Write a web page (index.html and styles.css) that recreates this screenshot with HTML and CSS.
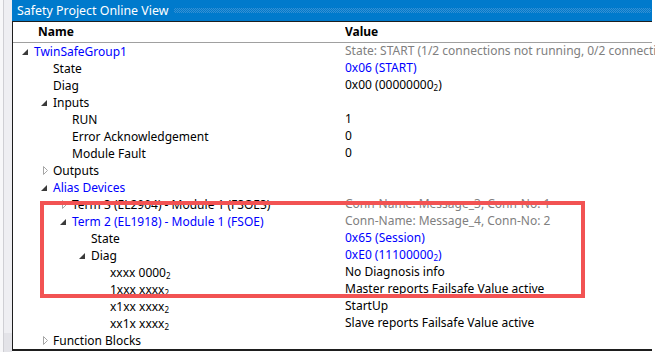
FILE: index.html
```html
<!DOCTYPE html>
<html lang="en">
<head>
    <meta charset="UTF-8">
    <link rel="stylesheet" href="styles.css">
</head>
<body>
    <div class="side">
        <div class="side-top"></div>
        <div class="side-bottom"></div>
    </div>

    <div class="panel">
        <div class="titlebar">
            <span class="title">Safety Project Online View</span>
            <span class="grip"></span>
        </div>

        <div class="view">
            <div class="row header">
                <div class="name">Name</div>
                <div class="value">Value</div>
            </div>

            <div class="row">
                <div class="name lvl0"><span class="tog"><svg class="open" width="6" height="6"><polygon points="6,0 6,6 0,6"/></svg></span><span class="blue">TwinSafeGroup1</span></div>
                <div class="value gray">State: START (1/2 connections not running, 0/2 connections with error)</div>
            </div>
            <div class="row">
                <div class="name lvl1"><span class="tog"></span>State</div>
                <div class="value blue">0x06 (START)</div>
            </div>
            <div class="row">
                <div class="name lvl1"><span class="tog"></span>Diag</div>
                <div class="value">0x00 (00000000<span class="sub">2</span>)</div>
            </div>
            <div class="row">
                <div class="name lvl1"><span class="tog"><svg class="open" width="6" height="6"><polygon points="6,0 6,6 0,6"/></svg></span>Inputs</div>
                <div class="value"></div>
            </div>
            <div class="row">
                <div class="name lvl2"><span class="tog"></span>RUN</div>
                <div class="value">1</div>
            </div>
            <div class="row">
                <div class="name lvl2"><span class="tog"></span>Error Acknowledgement</div>
                <div class="value">0</div>
            </div>
            <div class="row">
                <div class="name lvl2"><span class="tog"></span>Module Fault</div>
                <div class="value">0</div>
            </div>
            <div class="row">
                <div class="name lvl1"><span class="tog"><svg class="closed" width="6" height="10"><polygon points="0.5,0.5 4.5,4.5 0.5,8.5"/></svg></span>Outputs</div>
                <div class="value"></div>
            </div>
            <div class="row">
                <div class="name lvl1"><span class="tog"><svg class="open" width="6" height="6"><polygon points="6,0 6,6 0,6"/></svg></span><span class="blue">Alias Devices</span></div>
                <div class="value"></div>
            </div>
            <div class="row">
                <div class="name lvl2"><span class="tog"><svg class="closed" width="6" height="10"><polygon points="0.5,0.5 4.5,4.5 0.5,8.5"/></svg></span>Term 3 (EL2904) - Module 1 (FSOE3)</div>
                <div class="value gray">Conn-Name: Message_3, Conn-No: 1</div>
            </div>
            <div class="row">
                <div class="name lvl2"><span class="tog"><svg class="open" width="6" height="6"><polygon points="6,0 6,6 0,6"/></svg></span><span class="blue">Term 2 (EL1918) - Module 1 (FSOE)</span></div>
                <div class="value gray">Conn-Name: Message_4, Conn-No: 2</div>
            </div>
            <div class="row">
                <div class="name lvl3"><span class="tog"></span>State</div>
                <div class="value blue">0x65 (Session)</div>
            </div>
            <div class="row">
                <div class="name lvl3"><span class="tog"><svg class="open" width="6" height="6"><polygon points="6,0 6,6 0,6"/></svg></span>Diag</div>
                <div class="value blue">0xE0 (11100000<span class="sub">2</span>)</div>
            </div>
            <div class="row">
                <div class="name lvl4"><span class="tog"></span><span>xxxx 0000<span class="sub">2</span></span></div>
                <div class="value">No Diagnosis info</div>
            </div>
            <div class="row">
                <div class="name lvl4"><span class="tog"></span><span>1xxx xxxx<span class="sub">2</span></span></div>
                <div class="value">Master reports Failsafe Value active</div>
            </div>
            <div class="row">
                <div class="name lvl4"><span class="tog"></span><span>x1xx xxxx<span class="sub">2</span></span></div>
                <div class="value">StartUp</div>
            </div>
            <div class="row">
                <div class="name lvl4"><span class="tog"></span><span>xx1x xxxx<span class="sub">2</span></span></div>
                <div class="value">Slave reports Failsafe Value active</div>
            </div>
            <div class="row">
                <div class="name lvl1"><span class="tog"><svg class="closed" width="6" height="10"><polygon points="0.5,0.5 4.5,4.5 0.5,8.5"/></svg></span>Function Blocks</div>
                <div class="value"></div>
            </div>
        </div>
    </div>

    <!-- annotation drawn over the tree -->
    <div class="mark"></div>
</body>
</html>
```

FILE: styles.css
```css
body {
    margin: 0;
    height: 352px;
    display: flex;
    background: #ffffff;
    font-family: "Noto Sans", sans-serif;
    font-size: 12px;
    color: #000000;
    overflow: hidden;
}
.side {
    width: 12px;
    display: flex;
    flex-direction: column;
}
.side-top {
    flex: 1;
    background: linear-gradient(to right, #f7f7f9 0 3px, #cfcfd4 3px 4px, #eeeef2 4px);
}
.side-bottom {
    height: 19px;
    background: linear-gradient(to right, #f7f7f9 0 3px, #cfcfd4 3px 4px, #e3e3e8 4px);
}
.panel {
    width: 640px;
    height: 349px;
    display: flex;
    flex-direction: column;
}
.titlebar {
    height: 21px;
    background: #007acc;
    display: flex;
    align-items: center;
    padding-left: 5px;
}
.title {
    color: #ffffff;
    font-size: 12.4px;
    line-height: 21px;
    white-space: nowrap;
}
.grip {
    flex: 1;
    height: 5px;
    margin: 0 1px 0 6px;
    background: repeating-conic-gradient(#3790d3 0 25%, transparent 0 50%) 0 0 / 2px 2px;
}
.view {
    flex: 1;
    min-width: 0;
    border: 1px solid #1e1e1e;
    border-right: none;
    border-bottom-width: 2px;
}
.row {
    display: grid;
    grid-template-columns: 332px 311px;
    height: 17px;
    line-height: 15px;
    white-space: nowrap;
}
.row.header {
    height: 20px;
    line-height: 20px;
    font-weight: bold;
    border-bottom: 1px solid #a0a0a0;
}
.header .name {
    padding-left: 25px;
}
.name {
    display: flex;
    align-items: center;
}
.lvl0 { padding-left: 8px; }
.lvl1 { padding-left: 27px; }
.lvl2 { padding-left: 46px; }
.lvl3 { padding-left: 65px; }
.lvl4 { padding-left: 84px; }
.tog {
    width: 13px;
    height: 17px;
    flex: none;
    position: relative;
}
.tog svg {
    position: absolute;
    display: block;
}
.tog .open {
    left: 1px;
    top: 6px;
    fill: #3a3a3a;
}
.tog .closed {
    left: 3px;
    top: 4px;
    fill: #ffffff;
    stroke: #a6a6a6;
    stroke-width: 1;
}
.value {
    overflow: hidden;
}
.blue { color: #0000ff; }
.gray { color: #808080; }
.sub {
    font-size: 8px;
    vertical-align: -2px;
    line-height: 0;
}
.mark {
    position: absolute;
    left: 40px;
    top: 201px;
    width: 537px;
    height: 89px;
    border: 4px solid #f25353;
}
```
